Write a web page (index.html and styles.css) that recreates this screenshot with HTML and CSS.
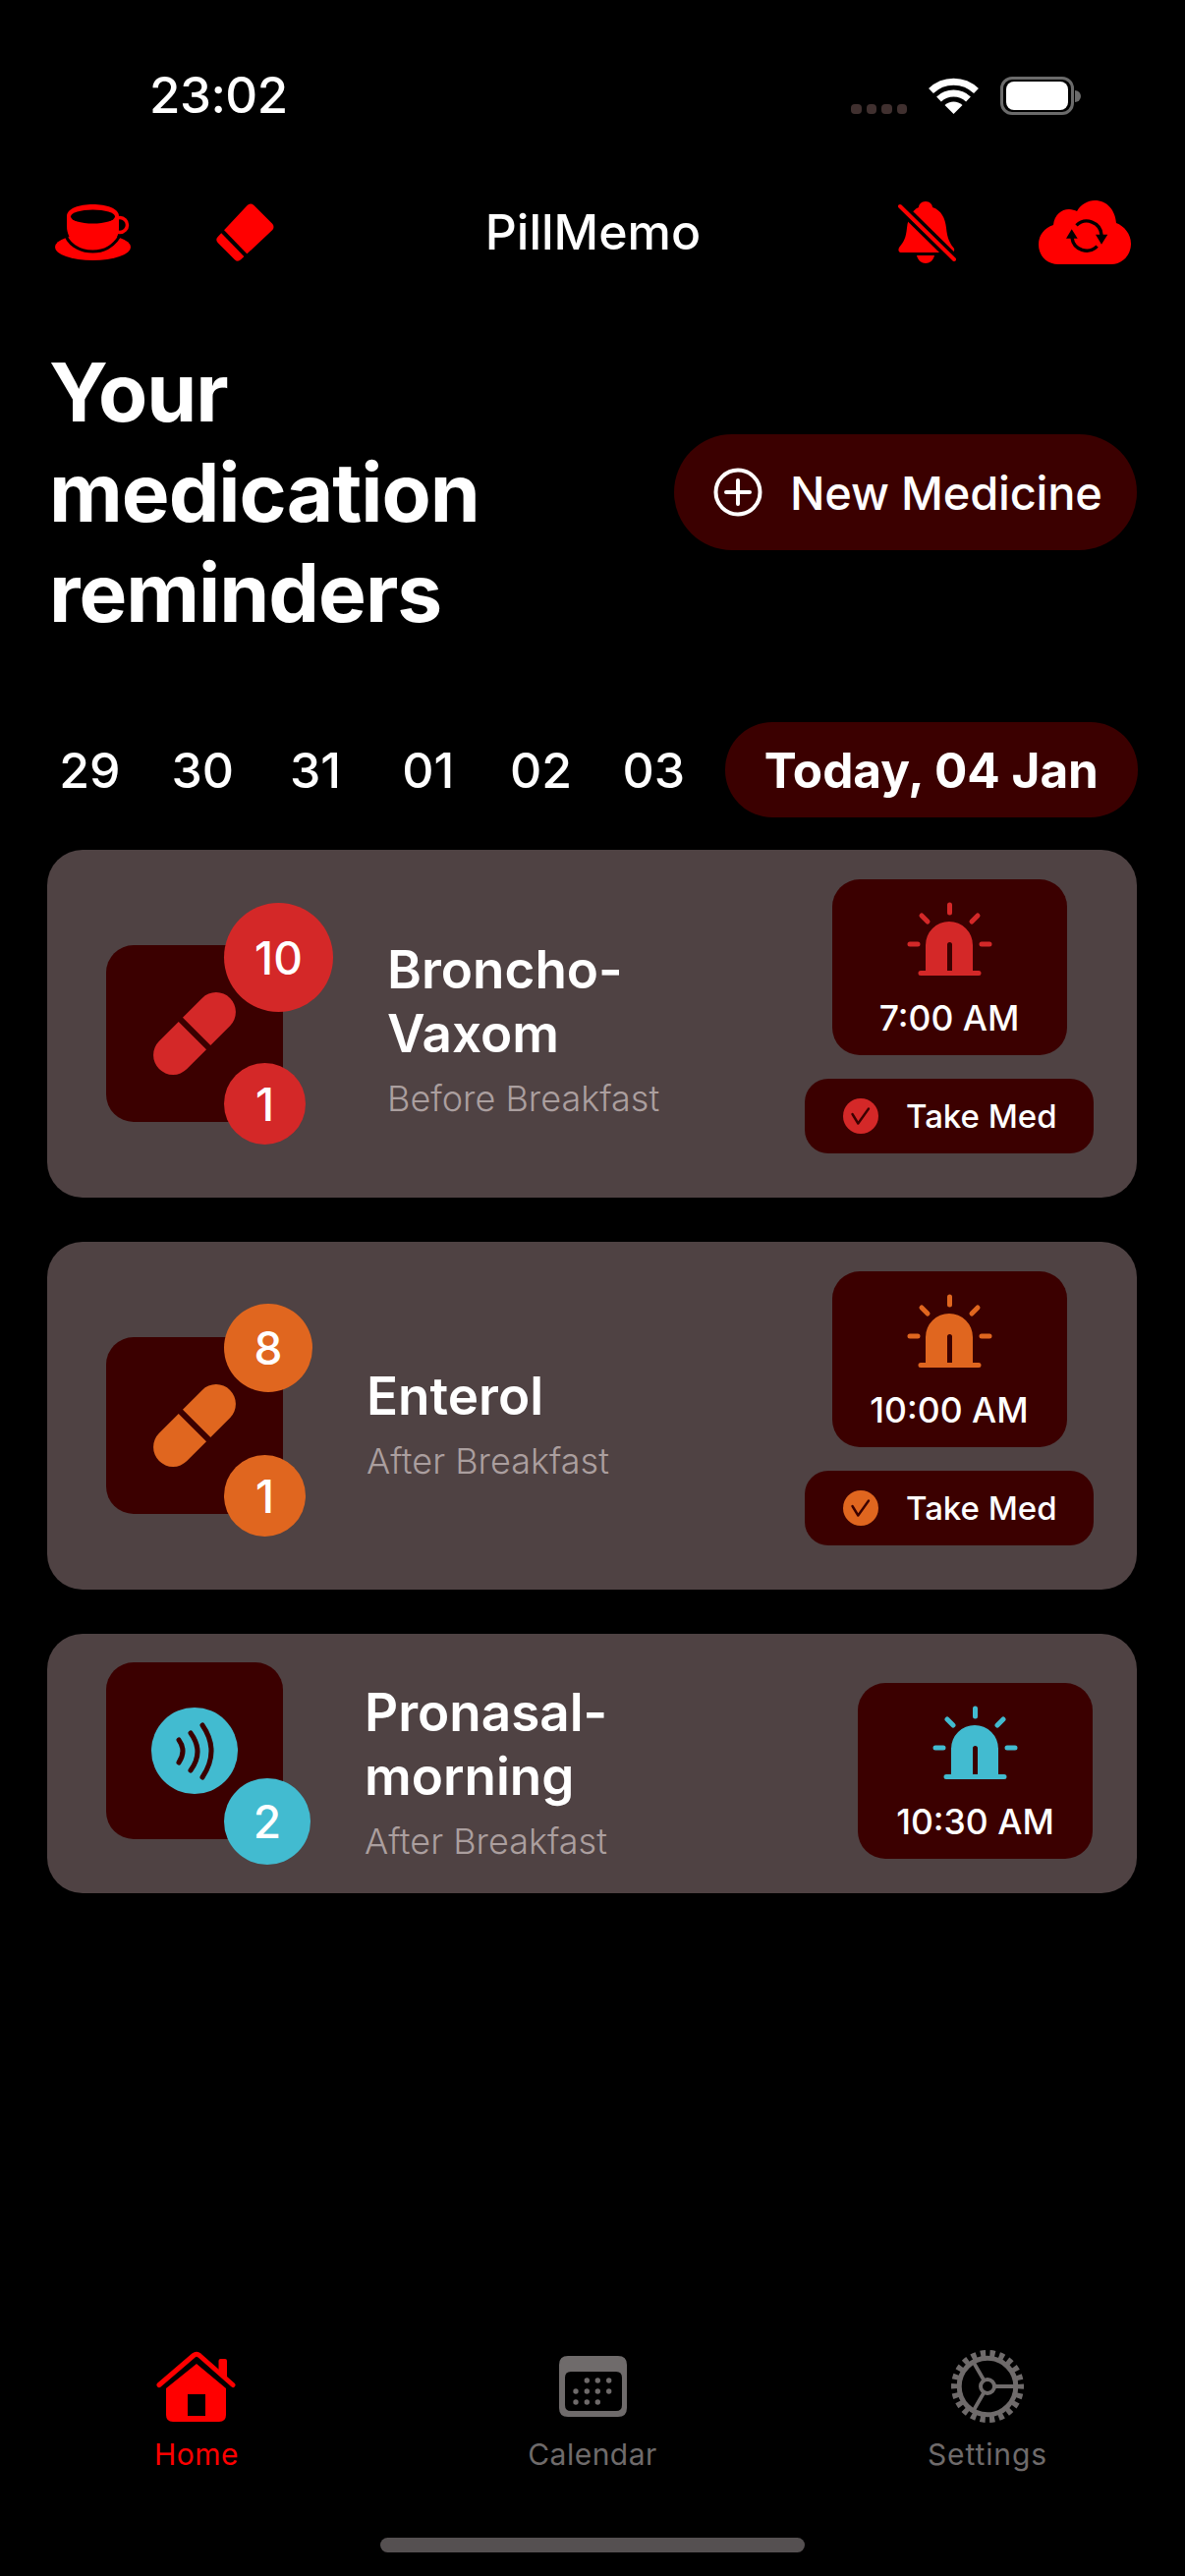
FILE: index.html
```html
<!DOCTYPE html>
<html lang="en">
<head>
<meta charset="utf-8">
<title>PillMemo</title>
<link rel="stylesheet" href="styles.css">
</head>
<body>
<svg class="defs" width="0" height="0" aria-hidden="true">
  <symbol id="pill" viewBox="0 0 84 84">
    <g transform="translate(42 42) rotate(-45)" fill="currentColor">
      <path d="M3 -20H31a20 20 0 0 1 0 40H3Z"/>
      <path d="M-3 -20H-31a20 20 0 0 0 0 40H-3Z"/>
    </g>
  </symbol>
  <symbol id="alarm" viewBox="0 0 87 75">
    <g fill="none" stroke="currentColor" stroke-width="5" stroke-linecap="round">
      <path d="M43.5 3V11M15 14L21 20M72 14L66 20M3 43H11M76 43H84M14 72.5H73"/>
    </g>
    <path fill="currentColor" fill-rule="evenodd" d="M19 71V44A24 24 0 0 1 67 44V71ZM41 70H46V43.500A2.500 2.500 0 0 0 41 43.500Z"/>
  </symbol>
  <symbol id="check" viewBox="0 0 36 36">
    <circle cx="18" cy="18" r="18" fill="currentColor"/>
    <path d="M9.500 16L15.300 25.500L26 10.500" fill="none" stroke="#3b0000" stroke-width="2.400" stroke-linecap="round" stroke-linejoin="round"/>
  </symbol>
</svg>

<div class="status">
  <span class="clock">23:02</span>
  <div class="status-right">
    <div class="signal"><i></i><i></i><i></i><i></i></div>
    <svg class="wifi" viewBox="0 0 51 37">
      <g fill="none" stroke="#fff" stroke-width="7">
        <path d="M2.500 13.500A33 33 0 0 1 48.500 13.500"/>
        <path d="M10.500 22A22 22 0 0 1 40.500 22"/>
      </g>
      <path fill="#fff" d="M25.500 37L16.500 28A13 13 0 0 1 34.500 28Z"/>
    </svg>
    <div class="battery"><div class="battery-fill"></div></div>
    <div class="battery-nub"></div>
  </div>
</div>

<header class="topbar">
  <div class="top-left">
    <svg class="ic-cup" viewBox="0 0 77 57">
      <ellipse cx="38.500" cy="43.500" rx="38.500" ry="13.500" fill="#f00"/>
      <circle cx="66" cy="21" r="7.500" fill="none" stroke="#f00" stroke-width="3.500"/>
      <path d="M12 12C12 4 25 0 38.500 0C52 0 65 4 65 12V25C65 38 52 45 38.500 45C25 45 12 38 12 22Z" fill="#f00"/>
      <path d="M10 28C12 40 24 48 38.500 48C50 48 60 42 66 32" fill="none" stroke="#000" stroke-width="3"/>
      <ellipse cx="38.500" cy="12.500" rx="22.500" ry="7" fill="#000"/>
    </svg>
    <svg class="ic-eraser" viewBox="0 0 59 59">
      <polygon points="35,5 54,24 22,54 5,37" fill="#f00" stroke="#f00" stroke-width="9" stroke-linejoin="round"/>
      <path d="M4 26L34 57" stroke="#000" stroke-width="4"/>
    </svg>
  </div>
  <h1 class="app-title">PillMemo</h1>
  <div class="top-right">
    <svg class="ic-bell" viewBox="0 0 59 63">
      <path fill="#f00" d="M28 0C32 0 35 3 35 6C44 9 48 17 49 27C50 38 53 43 57 48Q58 52 54 52H4Q-1 52 1 47C6 41 8 37 9 27C10 17 14 9 21 6C21 3 24 0 28 0Z"/>
      <path fill="#f00" d="M19 55H37C36 60 32 63 28 63C24 63 20 60 19 55Z"/>
      <path d="M1 4L58 60" stroke="#000" stroke-width="11"/>
      <path d="M2 5L57 59" stroke="#f00" stroke-width="4" stroke-linecap="round"/>
    </svg>
    <svg class="ic-cloud" viewBox="0 0 94 65">
      <path fill="#f00" d="M20 65C8 65 0 56 0 45C0 35 6 28 15 25C16 15 23 9 31 9C34 9 37 10 39 11C43 4 50 0 57 0C70 0 78 10 79 23C87 26 94 34 94 44C94 56 85 65 74 65Z"/>
      <g fill="none" stroke="#000" stroke-width="3.400">
        <path d="M38.500 25.400A15 15 0 0 1 64 35"/>
        <path d="M34 38A15 15 0 0 0 59.600 46.600"/>
      </g>
      <path d="M28 38.700H39.700L33.700 29.300ZM58 34.700H70.300L64 44.700Z" fill="#000"/>
    </svg>
  </div>
</header>

<section class="hero">
  <h2 class="hero-title">Your<br>medication<br>reminders</h2>
  <button class="new-btn">
    <svg class="ic-plus" viewBox="0 0 50 50">
      <circle cx="25" cy="25" r="22.500" fill="none" stroke="#fff" stroke-width="4"/>
      <path d="M25 13V37M13 25H37" stroke="#fff" stroke-width="4" stroke-linecap="round"/>
    </svg>
    <span>New Medicine</span>
  </button>
</section>

<nav class="dates">
  <span class="date">29</span>
  <span class="date">30</span>
  <span class="date">31</span>
  <span class="date">01</span>
  <span class="date">02</span>
  <span class="date">03</span>
  <span class="date-today">Today, 04 Jan</span>
</nav>

<main class="cards">
  <article class="card card-tall tone-red">
    <div class="med-icon">
      <svg class="ic-pill"><use href="#pill"/></svg>
      <span class="badge badge-count-lg">10</span>
      <span class="badge badge-dose">1</span>
    </div>
    <div class="info info-first">
      <div class="med-name">Broncho-<br>Vaxom</div>
      <div class="med-note">Before Breakfast</div>
    </div>
    <div class="actions">
      <div class="alarm">
        <svg class="ic-alarm"><use href="#alarm"/></svg>
        <span class="alarm-time">7:00 AM</span>
      </div>
      <div class="take">
        <svg class="ic-check"><use href="#check"/></svg>
        <span>Take Med</span>
      </div>
    </div>
  </article>

  <article class="card card-tall tone-orange">
    <div class="med-icon">
      <svg class="ic-pill"><use href="#pill"/></svg>
      <span class="badge badge-count">8</span>
      <span class="badge badge-dose">1</span>
    </div>
    <div class="info info-second">
      <div class="med-name">Enterol</div>
      <div class="med-note">After Breakfast</div>
    </div>
    <div class="actions">
      <div class="alarm">
        <svg class="ic-alarm"><use href="#alarm"/></svg>
        <span class="alarm-time">10:00 AM</span>
      </div>
      <div class="take">
        <svg class="ic-check"><use href="#check"/></svg>
        <span>Take Med</span>
      </div>
    </div>
  </article>

  <article class="card card-short tone-teal">
    <div class="med-icon">
      <svg class="ic-spray" viewBox="0 0 88 88">
        <circle cx="44" cy="44" r="44" fill="currentColor"/>
        <g fill="none" stroke="#3b0000" stroke-width="5" stroke-linecap="round">
          <path d="M28 33Q36 44 28 56"/>
          <path d="M40 26Q54 45 40 64"/>
          <path d="M52 18Q70 44 52 71"/>
        </g>
      </svg>
      <span class="badge badge-spray">2</span>
    </div>
    <div class="info info-third">
      <div class="med-name">Pronasal-<br>morning</div>
      <div class="med-note">After Breakfast</div>
    </div>
    <div class="actions actions-short">
      <div class="alarm">
        <svg class="ic-alarm"><use href="#alarm"/></svg>
        <span class="alarm-time">10:30 AM</span>
      </div>
    </div>
  </article>
</main>

<footer class="tabs">
  <div class="tab tab-active">
    <div class="tab-icon">
      <svg class="ic-home" viewBox="0 0 81 72">
        <path d="M3 34.500L38 4.500Q41 2 44 4.500L78 34.500" fill="none" stroke="#f00" stroke-width="5" stroke-linecap="round" stroke-linejoin="round"/>
        <path d="M63.500 20V10Q63.500 8 65.500 8H70Q72 8 72 10V27Z" fill="#f00"/>
        <path fill="#f00" fill-rule="evenodd" d="M41 13L71 38V65Q71 72 64 72H17Q10 72 10 65V38ZM32 44V66H50V44Z"/>
      </svg>
    </div>
    <span class="tab-label">Home</span>
  </div>
  <div class="tab">
    <div class="tab-icon">
      <svg class="ic-cal" viewBox="0 0 69 62">
        <path fill="#6f6b6b" fill-rule="evenodd" d="M9 0H60Q69 0 69 9V53Q69 62 60 62H9Q0 62 0 53V9Q0 0 9 0ZM12 16Q6 16 6 22V50Q6 56 12 56H58Q64 56 64 50V22Q64 16 58 16Z"/>
        <g fill="#6f6b6b">
          <circle cx="28.300" cy="25" r="2.700"/><circle cx="39.300" cy="25" r="2.700"/><circle cx="50.700" cy="25" r="2.700"/>
          <circle cx="17" cy="36" r="2.700"/><circle cx="28.300" cy="36" r="2.700"/><circle cx="39.300" cy="36" r="2.700"/><circle cx="50.700" cy="36" r="2.700"/>
          <circle cx="17" cy="47" r="2.700"/><circle cx="28.300" cy="47" r="2.700"/><circle cx="39.300" cy="47" r="2.700"/>
        </g>
      </svg>
    </div>
    <span class="tab-label">Calendar</span>
  </div>
  <div class="tab">
    <div class="tab-icon">
      <svg class="ic-gear" viewBox="0 0 74 74">
        <g fill="none" stroke="#6f6b6b">
          <circle cx="37" cy="37" r="33.500" stroke-width="7" stroke-dasharray="5.200 4.370" stroke-dashoffset="2.600"/>
          <circle cx="37" cy="37" r="28.800" stroke-width="5"/>
          <circle cx="37" cy="37" r="7" stroke-width="4"/>
          <path d="M44 37H66M33.500 31L22.500 12M33.500 43L22.500 62" stroke-width="3.800"/>
        </g>
      </svg>
    </div>
    <span class="tab-label tab-label-wide">Settings</span>
  </div>
</footer>
<div class="home-bar-row"><div class="home-bar"></div></div>
</body>
</html>
```

FILE: styles.css
```css
* { box-sizing: border-box; }
html, body { margin: 0; padding: 0; }
body {
  width: 1206px;
  height: 2622px;
  overflow: hidden;
  background: #000;
  color: #fff;
  font-family: Inter, "Liberation Sans", sans-serif;
  display: flex;
  flex-direction: column;
}
.defs { position: absolute; }
h1, h2 { margin: 0; }
svg { display: block; }

.status {
  height: 203px;
  padding: 78px 106px 0 152px;
  display: flex;
  justify-content: space-between;
  align-items: flex-start;
}
.clock { font-size: 51px; font-weight: 500; line-height: 38px; letter-spacing: -0.5px; }
.status-right { display: flex; align-items: flex-start; }
.signal { display: flex; gap: 5px; margin: 28px 22px 0 0; }
.signal i { width: 10.500px; height: 10px; border-radius: 4px; background: #40302f; display: block; }
.wifi { width: 51px; height: 37px; margin: 1px 22px 0 0; }
.battery {
  width: 75px; height: 39px;
  border: 3px solid #6b6b6b;
  border-radius: 12px;
  padding: 2px 3px;
}
.battery-fill { width: 100%; height: 100%; background: #fff; border-radius: 8px; }
.battery-nub { width: 6px; height: 12px; margin: 14px 0 0 1px; background: #6b6b6b; border-radius: 0 6px 6px 0; }

.topbar {
  height: 66px;
  padding: 0 55px 0 56px;
  display: grid;
  grid-template-columns: 1fr auto 1fr;
  align-items: center;
}
.top-left { display: flex; gap: 87px; align-items: center; }
.top-right { display: flex; gap: 84px; align-items: center; justify-content: flex-end; }
.ic-cup { width: 77px; height: 57px; }
.ic-eraser { width: 59px; height: 59px; }
.ic-bell { width: 59px; height: 63px; }
.ic-cloud { width: 94px; height: 65px; }
.app-title { font-size: 50px; font-weight: 500; line-height: 60px; }

.hero {
  margin-top: 80px;
  padding: 0 49px 0 50px;
  display: flex;
  justify-content: space-between;
  align-items: center;
}
.hero-title { font-size: 82px; font-weight: 700; line-height: 102px; letter-spacing: -1px; }
.new-btn {
  width: 471px;
  height: 118px;
  margin-bottom: 2px;
  border: 0;
  border-radius: 59px;
  background: #3b0000;
  color: #fff;
  font: 500 47px Inter, "Liberation Sans", sans-serif;
  letter-spacing: -0.2px;
  display: flex;
  align-items: center;
  gap: 28px;
  padding: 0 0 0 40px;
}
.ic-plus { width: 50px; height: 50px; }

.dates {
  margin-top: 80px;
  padding-left: 34px;
  display: flex;
  align-items: center;
}
.date { width: 114.800px; text-align: center; font-size: 50px; font-weight: 500; }
.date-today {
  margin-left: 15px;
  width: 420px;
  height: 97px;
  border-radius: 48px;
  background: #3b0000;
  font-size: 49.500px;
  font-weight: 700;
  display: flex;
  align-items: center;
  justify-content: center;
}

.cards {
  margin: 33px 49px 0 48px;
  display: flex;
  flex-direction: column;
  gap: 45px;
  flex: 1;
}
.tone-red { --tone: #d42828; }
.tone-orange { --tone: #e0661f; }
.tone-teal { --tone: #42bbd0; }
.card {
  background: #4f4243;
  border-radius: 36px;
  display: flex;
  align-items: flex-start;
  padding-left: 60px;
  color: var(--tone);
}
.card-tall { height: 354px; padding-top: 97px; }
.card-short { height: 264px; padding-top: 29px; }
.med-icon {
  position: relative;
  width: 180px;
  height: 180px;
  flex: none;
  border-radius: 28px;
  background: #3b0000;
  display: flex;
  align-items: center;
  justify-content: center;
}
.ic-pill { width: 84px; height: 84px; }
.ic-spray { width: 88px; height: 88px; }
.badge {
  position: absolute;
  left: 120px;
  border-radius: 50%;
  background: var(--tone);
  color: #fff;
  font-weight: 500;
  font-size: 46px;
  display: flex;
  align-items: center;
  justify-content: center;
}
.badge-count-lg { top: -43px; width: 111px; height: 111px; }
.badge-count { top: -34px; width: 90px; height: 90px; }
.badge-dose { top: 120px; width: 83px; height: 83px; }
.badge-spray { top: 118px; width: 88px; height: 88px; }

.info { flex: none; }
.info-first { margin: -7px 0 0 106px; }
.info-second { margin: 28px 0 0 85px; }
.info-third { margin: 19px 0 0 83px; }
.med-name { font-size: 53px; font-weight: 600; line-height: 65px; color: #fff; }
.med-note { font-size: 36px; font-weight: 300; line-height: 44px; margin-top: 11px; color: #ab9f9f; }

.actions {
  margin-left: auto;
  margin-top: -67px;
  margin-right: 44px;
  display: flex;
  flex-direction: column;
  align-items: center;
  gap: 24px;
}
.actions-short { margin-top: 21px; margin-right: 45px; }
.alarm {
  width: 239px;
  height: 179px;
  border-radius: 28px;
  background: #3b0000;
  padding-top: 23px;
  display: flex;
  flex-direction: column;
  align-items: center;
}
.ic-alarm { width: 87px; height: 75px; }
.alarm-time { margin-top: 23px; font-size: 35.500px; line-height: 42px; font-weight: 500; color: #fff; }
.take {
  width: 294px;
  height: 76px;
  border-radius: 24px;
  background: #3b0000;
  display: flex;
  align-items: center;
  gap: 28px;
  padding-left: 39px;
  color: #fff;
  font-size: 33px;
  font-weight: 500;
}
.ic-check { width: 36px; height: 36px; color: var(--tone); }

.tabs {
  display: grid;
  grid-template-columns: repeat(3, 1fr);
  height: 191px;
}
.tab { display: flex; flex-direction: column; align-items: center; color: #6f6b6b; }
.tab-active { color: #f00; padding-right: 2px; }
.tab-active .tab-icon { margin-right: 2px; }
.tab-icon { height: 74px; display: flex; align-items: center; justify-content: center; }
.tab-label { margin-top: 14px; font-size: 30px; line-height: 36px; font-weight: 400; letter-spacing: 0.5px; }
.tab-label-wide { letter-spacing: 0.9px; }
.ic-home { width: 81px; height: 72px; }
.ic-cal { width: 69px; height: 62px; }
.ic-gear { width: 74px; height: 74px; }
.home-bar-row { height: 39px; display: flex; justify-content: center; }
.home-bar { width: 432px; height: 15px; border-radius: 8px; background: #555051; }
```
